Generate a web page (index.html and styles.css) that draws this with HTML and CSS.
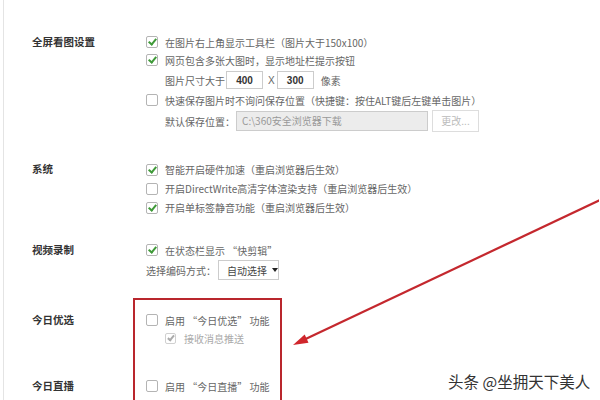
FILE: index.html
```html
<!DOCTYPE html>
<html lang="zh-CN">
<head>
    <meta charset="UTF-8">
    <title>高级设置</title>
    <link rel="stylesheet" href="styles.css">
</head>
<body>
    <div class="page">
        <!-- 全屏看图设置 -->
        <div class="section s1">
            <div class="label">全屏看图设置</div>
            <div class="opts">
                <div class="row"><span class="cb on"></span>在图片右上角显示工具栏（图片大于150x100）</div>
                <div class="row"><span class="cb on"></span>网页包含多张大图时，显示地址栏提示按钮</div>
                <div class="row tall indent">图片尺寸大于<span class="num">400</span><span class="x">X</span><span class="num">300</span>像素</div>
                <div class="row"><span class="cb"></span>快速保存图片时不询问保存位置（快捷键：按住ALT键后左键单击图片）</div>
                <div class="row taller indent">默认保存位置：<span class="path">C:\360安全浏览器下载</span><span class="btn">更改...</span></div>
            </div>
        </div>

        <!-- 系统 -->
        <div class="section s2">
            <div class="label">系统</div>
            <div class="opts">
                <div class="row r19"><span class="cb on"></span>智能开启硬件加速（重启浏览器后生效）</div>
                <div class="row r19"><span class="cb"></span>开启DirectWrite高清字体渲染支持（重启浏览器后生效）</div>
                <div class="row r19"><span class="cb on"></span>开启单标签静音功能（重启浏览器后生效）</div>
            </div>
        </div>

        <!-- 视频录制 -->
        <div class="section s3">
            <div class="label">视频录制</div>
            <div class="opts">
                <div class="row"><span class="cb on"></span>在状态栏显示 “快剪辑”</div>
                <div class="row tall">选择编码方式：<span class="select">自动选择<i class="caret"></i></span></div>
            </div>
        </div>

        <!-- 今日优选 -->
        <div class="section s4">
            <div class="label">今日优选</div>
            <div class="opts">
                <div class="row"><span class="cb"></span>启用 “今日优选” 功能</div>
                <div class="row sub"><span class="cb small on off"></span>接收消息推送</div>
            </div>
        </div>

        <!-- 今日直播 -->
        <div class="section s5">
            <div class="label">今日直播</div>
            <div class="opts">
                <div class="row"><span class="cb"></span>启用 “今日直播” 功能</div>
            </div>
        </div>

        <!-- 标注 -->
        <div class="mark"></div>
        <svg class="arrow" width="600" height="400" viewBox="0 0 600 400">
            <line x1="620" y1="190.6" x2="304" y2="339.8" stroke="#c4282e" stroke-width="2.2"/>
            <polygon points="293,345 308.5,342.7 304.7,334.5" fill="#d0262c"/>
        </svg>
        <div class="water">头条 @坐拥天下美人</div>
    </div>
</body>
</html>
```

FILE: styles.css
```css
/*初始化*/
html,body{
    margin: 0;
    padding: 0;
    background: #fff;
}

/*页面外框*/
.page{
    position: relative;
    width: 596px;
    height: 400px;
    margin-left: 3px;
    border-left: 1px solid #e4e4e4;
    padding: 33px 0 0 28px;
    box-sizing: border-box;
    overflow: hidden;
    font-family: "Noto Sans CJK SC", "Liberation Sans", sans-serif;
    font-size: 10px;
    color: #666;
}

/*每一组设置*/
.section{
    display: flex;
}
.s2{ margin-top: 27px; }
.s3{ margin-top: 24px; }
.s4{ margin-top: 30px; }
.s5{ margin-top: 30px; }

.label{
    width: 114px;
    flex-shrink: 0;
    height: 18px;
    line-height: 18px;
    font-size: 10.5px;
    font-weight: bold;
    color: #333;
}

.opts{
    display: flex;
    flex-direction: column;
}

.row{
    display: flex;
    align-items: center;
    height: 18px;
    white-space: nowrap;
}
.r19{ height: 19px; }
.tall{ height: 22px; }
.taller{ height: 24px; }
.indent{ padding-left: 19px; }
.sub{ padding-left: 19px; color: #aaa; }

/*复选框*/
.cb{
    position: relative;
    width: 12px;
    height: 12px;
    border: 1px solid #b4b4b4;
    border-radius: 2px;
    box-sizing: border-box;
    margin-right: 7px;
    background: #fff;
    flex-shrink: 0;
}
.cb.on::after{
    content: "";
    position: absolute;
    left: 3px;
    top: 0;
    width: 3px;
    height: 6px;
    border-right: 2px solid #3f9a38;
    border-bottom: 2px solid #3f9a38;
    transform: rotate(40deg);
}
.cb.small{
    width: 11px;
    height: 11px;
    margin-right: 8px;
    border-color: #d0d0d0;
}
.cb.small.off::after{
    left: 3px;
    top: 0;
    width: 2px;
    height: 5px;
    border-color: #aaa;
}

/*输入框*/
.num{
    width: 37px;
    height: 18px;
    line-height: 18px;
    border: 1px solid #ccc;
    box-sizing: border-box;
    margin-left: 1px;
    text-align: center;
    font-family: "Liberation Sans", sans-serif;
    font-weight: bold;
    color: #333;
}
.x{
    margin: 0 2px 0 5px;
    font-family: "Liberation Sans", sans-serif;
}
.num + .x + .num{ margin-left: 0; }
.num:last-of-type{ margin-right: 7px; }

.path{
    width: 192px;
    height: 20px;
    line-height: 18px;
    margin-left: 1px;
    padding-left: 5px;
    border: 1px solid #ccc;
    box-sizing: border-box;
    background: #ececec;
    color: #999;
}
.btn{
    width: 47px;
    height: 22px;
    line-height: 20px;
    margin-left: 4px;
    border: 1px solid #ddd;
    box-sizing: border-box;
    text-align: center;
    color: #bbb;
}

/*下拉框*/
.select{
    display: flex;
    align-items: center;
    width: 61px;
    height: 20px;
    margin-left: 2px;
    padding-left: 8px;
    border: 1px solid #ccc;
    box-sizing: border-box;
    color: #444;
}
.caret{
    margin-left: 5px;
    border-left: 3px solid transparent;
    border-right: 3px solid transparent;
    border-top: 4px solid #222;
}

/*红色标注框*/
.mark{
    position: absolute;
    left: 129px;
    top: 298px;
    width: 149px;
    height: 130px;
    border: 2px solid #b9262d;
    box-sizing: border-box;
}
.arrow{
    position: absolute;
    left: -4px;
    top: 0;
}

/*水印*/
.water{
    position: absolute;
    left: 444px;
    top: 371px;
    font-size: 15.5px;
    line-height: 20px;
    color: #333;
    text-shadow: 0 0 2px #fff, 0 0 2px #fff;
}
```
